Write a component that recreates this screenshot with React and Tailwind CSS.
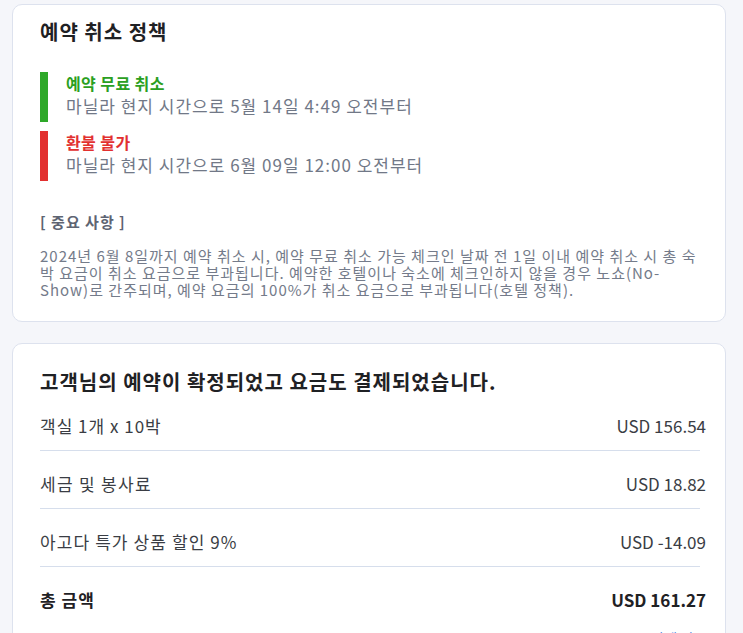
export default function App() {
  const font = { fontFamily: '"Noto Sans CJK KR", "Noto Sans", sans-serif' };
  return (
    <div className="min-h-[633px] w-full bg-[#f5f6fa] pt-[4px] pb-10" style={font}>
      {/* Card 1 */}
      <div className="ml-3 w-[714px] rounded-[10px] border border-[#dde2ee] bg-white pl-[27px] pr-[20px] pt-[13px] pb-[23px]">
        <h2 className="text-[20px] leading-[28px] font-bold tracking-[1px] text-[#1f2124]">예약 취소 정책</h2>
        <div className="mt-[26px] flex flex-col gap-[9px]">
          <div className="flex">
            <div className="w-2 bg-[#2ea829]" />
            <div className="pl-[18px] pb-1">
              <div className="text-[16px] leading-[22px] font-bold tracking-[0.4px] text-[#2b9f22]">예약 무료 취소</div>
              <div className="text-[17px] leading-[24px] tracking-[1px] text-[#717887]">마닐라 현지 시간으로 5월 14일 4:49 오전부터</div>
            </div>
          </div>
          <div className="flex">
            <div className="w-2 bg-[#e2302f]" />
            <div className="pl-[18px] pb-1">
              <div className="text-[16px] leading-[22px] font-bold tracking-[0.4px] text-[#e2302f]">환불 불가</div>
              <div className="text-[17px] leading-[24px] tracking-[1px] text-[#717887]">마닐라 현지 시간으로 6월 09일 12:00 오전부터</div>
            </div>
          </div>
        </div>
        <div className="mt-[31px] text-[15px] leading-[20px] font-bold tracking-[1px] text-[#5e6472]">[ 중요 사항 ]</div>
        <p className="mt-[15px] text-[15px] leading-[17px] text-[#747b8a] tracking-[1px]">
          <span className="block whitespace-nowrap">2024년 6월 8일까지 예약 취소 시, 예약 무료 취소 가능 체크인 날짜 전 1일 이내 예약 취소 시 총 숙</span>
          <span className="block whitespace-nowrap">박 요금이 취소 요금으로 부과됩니다. 예약한 호텔이나 숙소에 체크인하지 않을 경우 노쇼(No-</span>
          <span className="block whitespace-nowrap">Show)로 간주되며, 예약 요금의 100%가 취소 요금으로 부과됩니다(호텔 정책).</span>
        </p>
      </div>

      {/* Card 2 */}
      <div className="ml-3 mt-[21px] w-[714px] rounded-[10px] border border-[#dde2ee] bg-white pl-[27px] pr-[19px] pt-[24px] pb-8">
        <h2 className="text-[20px] leading-[28px] font-bold tracking-[1px] text-[#1f2124]">고객님의 예약이 확정되었고 요금도 결제되었습니다.</h2>
        <div className="mt-[18px]">
          <div className="flex justify-between text-[17px] leading-[24px] text-[#3a3d44] pb-[12px]">
            <span className="tracking-[1px]">객실 1개 x 10박</span>
            <span>USD 156.54</span>
          </div>
          <div className="mr-[6px] h-px bg-[#d6deec]" />
          <div className="flex justify-between text-[17px] leading-[24px] text-[#3a3d44] pt-[21px] pb-[12px]">
            <span className="tracking-[1.3px]">세금 및 봉사료</span>
            <span>USD 18.82</span>
          </div>
          <div className="mr-[6px] h-px bg-[#d6deec]" />
          <div className="flex justify-between text-[17px] leading-[24px] text-[#3a3d44] pt-[21px] pb-[12px]">
            <span className="tracking-[1.1px]">아고다 특가 상품 할인 9%</span>
            <span>USD -14.09</span>
          </div>
          <div className="mr-[6px] h-px bg-[#d6deec]" />
          <div className="flex justify-between text-[17px] leading-[24px] font-bold text-[#1f2124] pt-[21px]">
            <span className="tracking-[1px]">총 금액</span>
            <span>USD 161.27</span>
          </div>
          <div className="mt-[16px] flex justify-end text-[14px] leading-[20px] text-[#1a6be0]">
            <span>요금 상세 정보</span>
          </div>
        </div>
      </div>
    </div>
  );
}
